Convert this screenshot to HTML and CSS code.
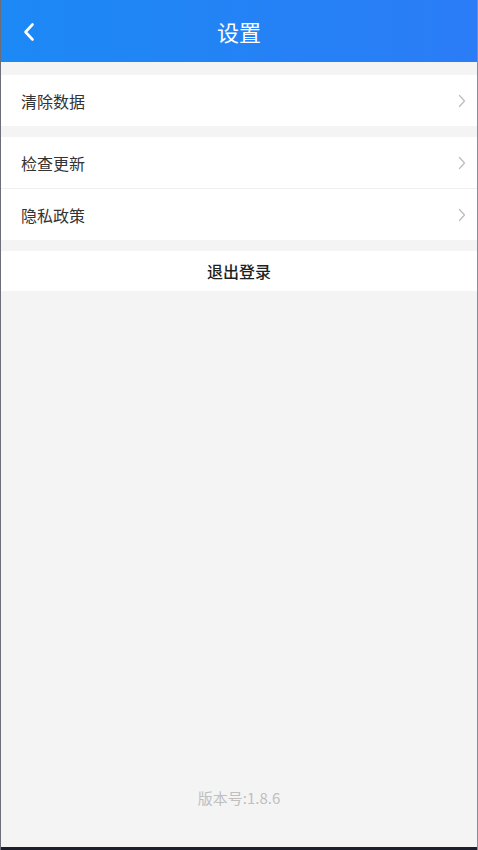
FILE: index.html
```html
<!DOCTYPE html>
<html lang="zh-CN">
<head>
<meta charset="utf-8">
<title>设置</title>
<link rel="stylesheet" href="styles.css">
</head>
<body>
<div class="app">
  <header class="topbar">
    <button class="back" aria-label="返回">
      <svg width="14" height="20" viewBox="0 0 14 20"><path d="M10.5 2.5 L3.5 10 L10.5 17.5" fill="none" stroke="#fff" stroke-width="2.6" stroke-linecap="round" stroke-linejoin="round"/></svg>
    </button>
    <h1 class="title">设置</h1>
  </header>
  <main class="content">
    <section class="group first">
      <div class="row"><span class="label">清除数据</span><svg class="chev" width="8" height="14" viewBox="0 0 8 14"><path d="M1.5 1.5 L6.5 7 L1.5 12.5" fill="none" stroke="#bdbdbd" stroke-width="1.3" stroke-linecap="round" stroke-linejoin="round"/></svg></div>
    </section>
    <section class="group">
      <div class="row divided"><span class="label">检查更新</span><svg class="chev" width="8" height="14" viewBox="0 0 8 14"><path d="M1.5 1.5 L6.5 7 L1.5 12.5" fill="none" stroke="#bdbdbd" stroke-width="1.3" stroke-linecap="round" stroke-linejoin="round"/></svg></div>
      <div class="row"><span class="label">隐私政策</span><svg class="chev" width="8" height="14" viewBox="0 0 8 14"><path d="M1.5 1.5 L6.5 7 L1.5 12.5" fill="none" stroke="#bdbdbd" stroke-width="1.3" stroke-linecap="round" stroke-linejoin="round"/></svg></div>
    </section>
    <section class="group">
      <div class="logout">退出登录</div>
    </section>
    <footer class="version">版本号:1.8.6</footer>
  </main>
  <div class="navbar"></div>
</div>
</body>
</html>
```
FILE: styles.css
```css
* { box-sizing: border-box; }
html, body { margin: 0; padding: 0; }
body {
  font-family: "Noto Sans CJK SC", "Noto Sans", "Liberation Sans", sans-serif;
  background: #f4f4f4;
}
.app {
  width: 478px;
  height: 850px;
  display: flex;
  flex-direction: column;
  border-left: 1px solid #6b6e78;
  border-right: 1px solid #8a8c94;
  background: #f4f4f4;
  overflow: hidden;
}
.topbar {
  height: 62px;
  flex: none;
  display: flex;
  align-items: center;
  justify-content: center;
  position: relative;
  background: linear-gradient(to right, #1c89f5, #2b7cf6);
}
.back {
  position: absolute;
  left: 19px;
  top: 22px;
  width: 18px;
  height: 20px;
  padding: 0;
  border: 0;
  background: none;
  display: flex;
  align-items: center;
  justify-content: center;
}
.title {
  margin: 0;
  color: #fff;
  font-size: 22px;
  font-weight: 400;
  line-height: 30px;
  letter-spacing: 0;
}
.content {
  flex: 1;
  display: flex;
  flex-direction: column;
}
.group {
  background: #fff;
  margin-top: 11px;
}
.group.first { margin-top: 13px; }
.row {
  height: 51px;
  display: flex;
  align-items: center;
  justify-content: space-between;
  padding: 0 11px 0 20px;
}
.row.divided {
  height: 52px;
  border-bottom: 1px solid #f0f0f0;
}
.label {
  font-size: 16px;
  color: #333;
  line-height: 22px;
}
.chev { flex: none; }
.logout {
  height: 40px;
  display: flex;
  align-items: center;
  justify-content: center;
  font-size: 16px;
  font-weight: 500;
  color: #1f1f1f;
}
.version {
  margin-top: auto;
  text-align: center;
  font-size: 15px;
  line-height: 20px;
  color: #bfbfbf;
  padding-bottom: 39px;
}
.navbar {
  height: 3px;
  flex: none;
  background: #1d1f2c;
}
```
